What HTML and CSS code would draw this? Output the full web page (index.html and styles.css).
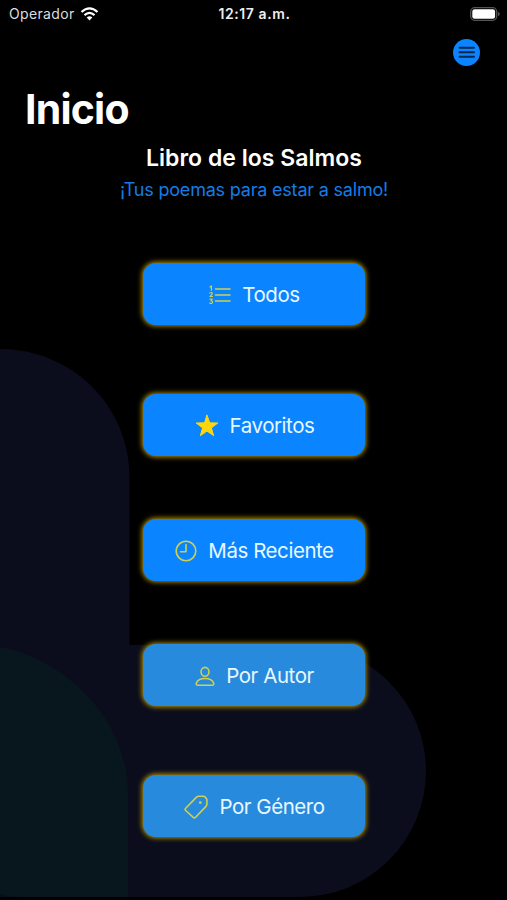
FILE: index.html
```
<!DOCTYPE html>
<html lang="es">
<head>
    <meta charset="UTF-8">
    <meta name="viewport" content="width=device-width, initial-scale=1.0">
    <title>Libro de los Salmos</title>
    <link rel="stylesheet" href="styles.css">
</head>
<body>
    <!-- Fondo decorativo -->
    <svg class="background" viewBox="0 0 507 900">
        <path class="shape-navy" d="M0 349C71 349 129.500 405 129.500 477V645H300A126 126 0 0 1 300 897H0Z"/>
        <path class="shape-teal" d="M0 647C50 655 124 705 128 790V897H22Q8 897 0 894Z"/>
    </svg>

    <header class="status-bar">
        <div class="carrier">
            <span>Operador</span>
            <svg class="wifi" viewBox="0 0 18 14">
                <path d="M1 5Q9-2.200 17 5M4 8.100Q9 3.500 14 8.100"/>
                <path class="wifi-dot" d="M6.200 10.500Q9 8.200 11.800 10.500L9 13.500Z"/>
            </svg>
        </div>
        <span class="time">12:17 a.m.</span>
        <svg class="battery" viewBox="0 0 30 14">
            <rect class="battery-case" x=".7" y=".7" width="26" height="12.600" rx="4"/>
            <rect class="battery-level" x="2.300" y="2.300" width="22.800" height="9.400" rx="2.300"/>
            <path class="battery-cap" d="M28 4.700Q29.800 5.500 29.800 7T28 9.300Z"/>
        </svg>
    </header>

    <nav>
        <button class="menu" aria-label="Menú">
            <svg viewBox="0 0 27 27">
                <path d="M6.500 8.700h14.500M6.500 13.200h14.500M6.500 17.700h14.500"/>
            </svg>
        </button>
    </nav>

    <main>
        <h1>Inicio</h1>
        <h2>Libro de los Salmos</h2>
        <p class="subtitle">¡Tus poemas para estar a salmo!</p>

        <div class="options">
            <button class="option">
                <svg class="icon list" viewBox="0 0 22 20">
                    <path d="M6.500 4H21M6.500 10H21M6.500 16H21"/>
                    <path class="digits" d="M1 2L2.400 1V5.200M.8 8Q3.300 6.800 3.300 8.400Q3.300 9.500 1 11.500H3.500M.8 14H3.300L2 15.700Q3.500 15.700 3.500 17Q3.500 19 .7 18.200"/>
                </svg>
                <span>Todos</span>
            </button>
            <button class="option favorites">
                <svg class="icon star" viewBox="0 0 24 24">
                    <path d="M12 1.200L14.700 8.800L22.800 9L16.400 13.900L18.700 21.700L12 17.100L5.300 21.700L7.600 13.900L1.200 9L9.300 8.800Z"/>
                </svg>
                <span>Favoritos</span>
            </button>
            <button class="option">
                <svg class="icon clock" viewBox="0 0 22 22">
                    <circle cx="11" cy="11" r="9.800"/>
                    <path d="M11 4.500V11.700H5.500"/>
                </svg>
                <span>Más Reciente</span>
            </button>
            <button class="option light">
                <svg class="icon person" viewBox="0 0 20 21">
                    <ellipse cx="10" cy="5.800" rx="4" ry="4.400"/>
                    <path d="M3 19.200H17C18.700 19.200 19 18.200 18.600 17C17.500 14.200 14 12.500 10 12.500S2.500 14.200 1.400 17C1 18.200 1.300 19.200 3 19.200Z"/>
                </svg>
                <span>Por Autor</span>
            </button>
            <button class="option light genre">
                <svg class="icon tag" viewBox="0 0 24 24">
                    <path d="M1.700 13.200L12.300 2.400Q13.500 1.200 15 1.200H19.300Q20.300 1.200 21 1.900L22.200 3.200Q22.900 4 22.900 5V9Q22.900 10.500 21.800 11.600L11.600 22.200Q10.300 23.500 9 22.200L1.700 15.500Q.5 14.400 1.700 13.200Z"/>
                    <circle class="hole" cx="16.300" cy="7.600" r="1.400"/>
                </svg>
                <span>Por Género</span>
            </button>
        </div>
    </main>
</body>
</html>
```
FILE: styles.css
```
* {
    box-sizing: border-box;
}

body {
    margin: 0;
    height: 900px;
    overflow: hidden;
    background-color: #000;
    color: #fff;
    font-family: Inter, "Liberation Sans", sans-serif;
}

svg {
    display: block;
    flex: none;
    fill: none;
}

.background {
    position: absolute;
    top: 0;
    left: 0;
    width: 507px;
    height: 900px;
    z-index: -1;
}

.shape-navy {
    fill: #0b0d1c;
}

.shape-teal {
    fill: #08161e;
}

.status-bar {
    display: grid;
    grid-template-columns: 1fr auto 1fr;
    align-items: center;
    height: 28px;
    padding: 0 7px 0 9px;
    font-size: 14px;
    line-height: 28px;
}

.carrier {
    display: flex;
    align-items: center;
    gap: 5px;
    letter-spacing: 0.35px;
    color: #dedede;
}

.wifi {
    width: 19px;
    height: 14px;
    stroke: #fff;
    stroke-width: 2.200;
}

.wifi-dot {
    fill: #fff;
    stroke: none;
}

.time {
    font-weight: 600;
    letter-spacing: 0.6px;
    color: #eee;
}

.battery {
    width: 30px;
    height: 14px;
    justify-self: end;
}

.battery-case {
    stroke: #555;
    stroke-width: 1.300;
}

.battery-level {
    fill: #fff;
}

.battery-cap {
    fill: #555;
}

nav {
    display: flex;
    justify-content: flex-end;
    padding: 11px 27px 0;
}

button {
    border: none;
    padding: 0;
    font-family: inherit;
    cursor: pointer;
}

.menu {
    width: 27px;
    height: 27px;
    border-radius: 50%;
    background-color: #0a84ff;
}

.menu svg {
    width: 27px;
    height: 27px;
    stroke: #06264e;
    stroke-width: 2;
    stroke-linecap: round;
}

h1 {
    margin: 18px 0 0 25px;
    font-size: 41px;
    line-height: 50px;
    font-weight: 700;
    letter-spacing: -0.8px;
}

h2 {
    margin: 9px 0 0;
    padding-left: 1px;
    font-size: 23px;
    line-height: 30px;
    font-weight: 600;
    letter-spacing: 0.02px;
    text-align: center;
}

.subtitle {
    margin: 5px 0 0;
    padding-left: 1px;
    font-size: 18px;
    line-height: 24px;
    letter-spacing: -0.2px;
    text-align: center;
    color: #147ce5;
}

.options {
    display: flex;
    flex-direction: column;
    align-items: center;
    gap: 63px;
    padding-top: 61px;
}

.option {
    display: flex;
    justify-content: center;
    align-items: center;
    gap: 11px;
    width: 222px;
    height: 62px;
    padding: 2px 0 0 2px;
    border-radius: 13px;
    background-color: #0a84ff;
    box-shadow: 0 0 5px 1px #b99600;
    color: #e8f8ff;
    font-size: 20.5px;
    line-height: 28px;
    letter-spacing: -0.45px;
}

.favorites,
.genre {
    margin-top: 6px;
}

.light {
    background-color: #288add;
}

.icon {
    stroke: #cdd052;
    stroke-width: 1.600;
    stroke-linejoin: round;
    stroke-linecap: round;
}

.list {
    width: 22px;
    height: 20px;
}

.digits {
    stroke-width: 1.200;
}

.star {
    width: 24px;
    height: 24px;
    fill: #ffd60a;
    stroke: #ffd60a;
    stroke-width: 1;
}

.clock {
    width: 22px;
    height: 22px;
}

.person {
    width: 20px;
    height: 21px;
}

.tag {
    width: 24px;
    height: 24px;
}

.hole {
    fill: #cdd052;
    stroke: none;
}
```
